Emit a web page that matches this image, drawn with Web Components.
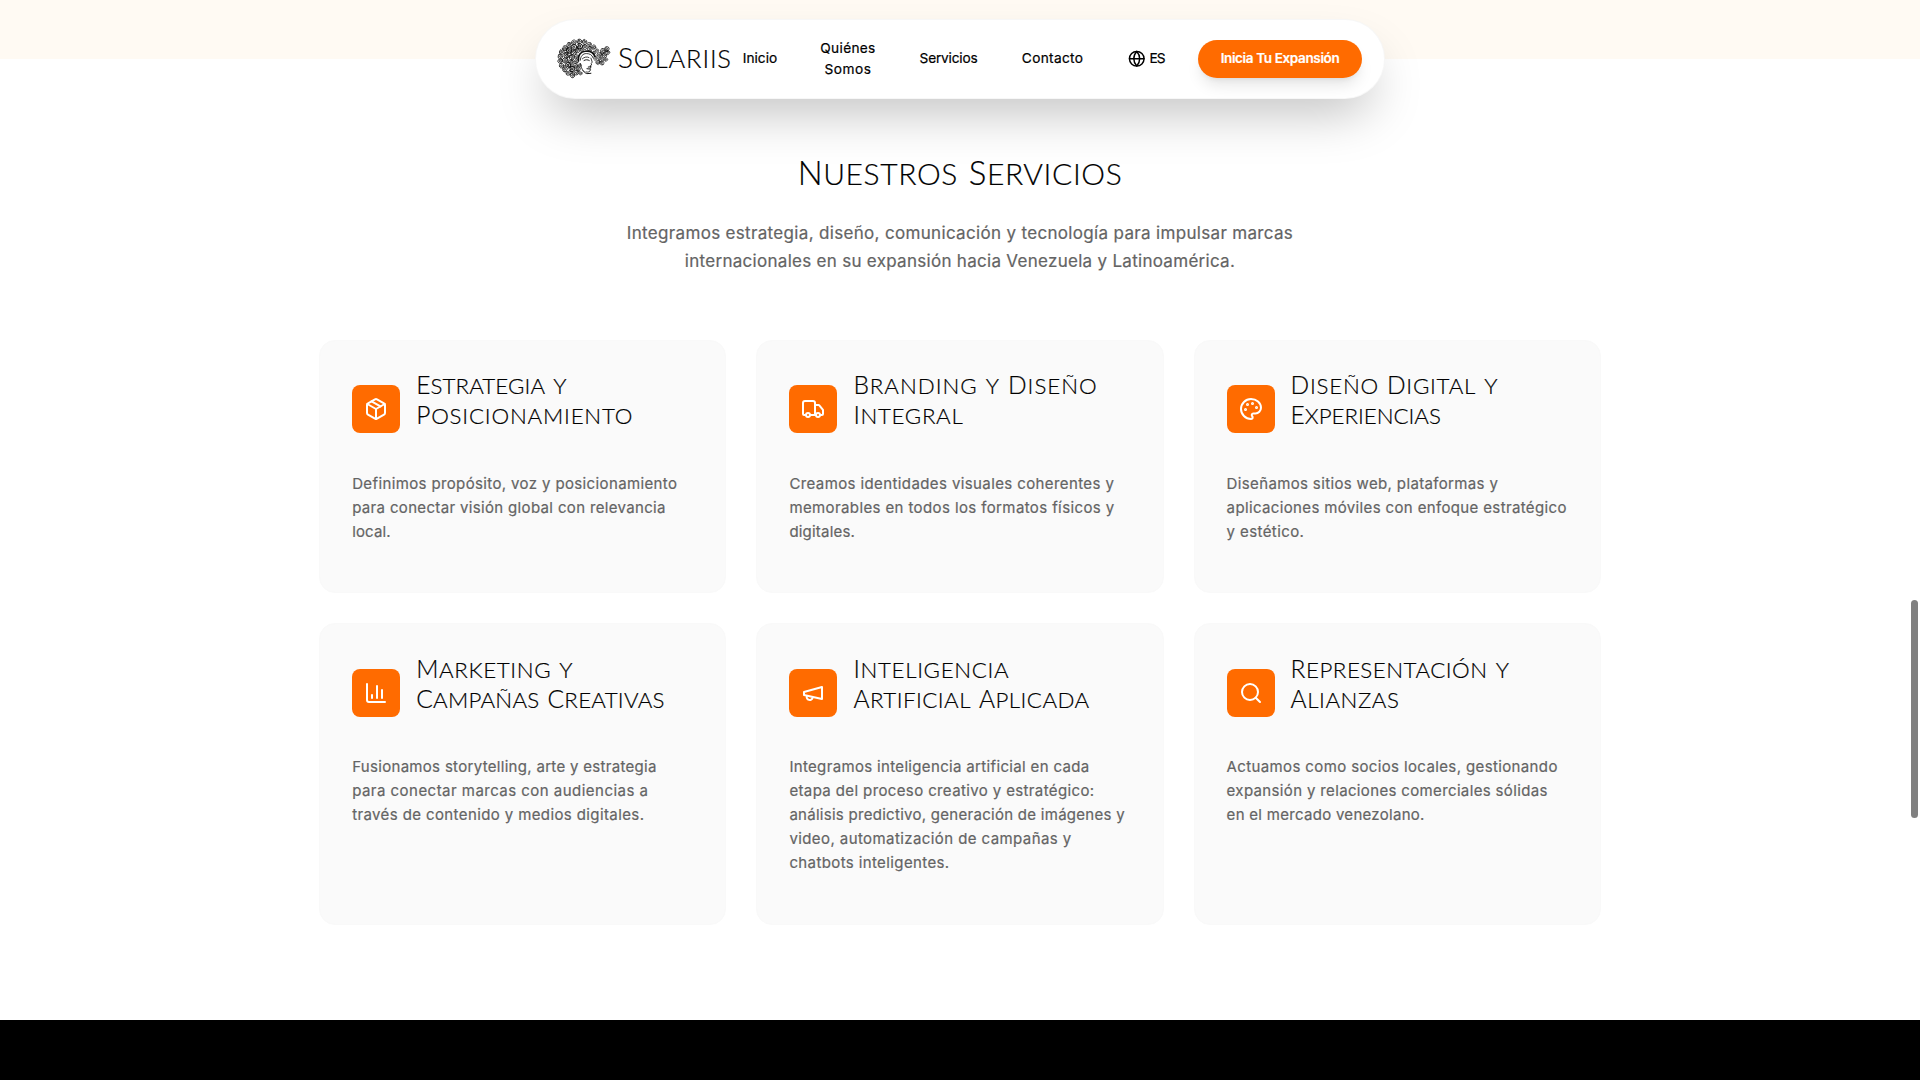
<!DOCTYPE html>
<html lang="es">
<head>
<meta charset="utf-8">
<title>Solariis</title>
<style>
html,body{margin:0;height:1080px;overflow:hidden;background:#fff}
body{font-family:Inter,"Liberation Sans",sans-serif;color:#000}
</style>
</head>
<body>
<solariis-page></solariis-page>
<script>
const define=(name,html,setup)=>{
  const t=document.createElement('template');t.innerHTML=html;
  customElements.define(name,class extends HTMLElement{
    connectedCallback(){
      if(this.shadowRoot)return;
      this.attachShadow({mode:'open'}).append(t.content.cloneNode(true));
      if(setup)setup(this,this.shadowRoot);
    }
  });
};

/* Letter-spacing that makes a line exactly w pixels wide. */
const fit=(host,span,n)=>{
  const w=parseFloat(host.getAttribute('w'));
  if(!w)return;
  const a=span.getBoundingClientRect().width;
  host.style.letterSpacing=((w-a)/(n-1)).toFixed(4)+'px';
};

/* One line of body text. */
define('text-line',`<style>:host{display:block;white-space:nowrap;-webkit-text-stroke:.2px currentColor}span{display:inline-block}</style><span></span>`,(h,r)=>{
  const s=r.querySelector('span');s.textContent=h.getAttribute('text');fit(h,s,s.textContent.length);
});

/* One line of display text: thin capitals with slightly taller initials. */
define('caps-line',`<style>
:host{display:block;white-space:nowrap;font-family:Lato,"Liberation Sans",sans-serif;font-weight:300;text-transform:uppercase;font-size:var(--s);-webkit-text-stroke:.2px currentColor}
span{display:inline-block}
.row{white-space:nowrap}
.sp{width:calc(var(--s)*.36)}
.cap::first-letter{font-size:calc(var(--s)*1.1);line-height:0}
</style><span class="row"></span>`,(h,r)=>{
  const row=r.querySelector('.row');const text=h.getAttribute('text');
  text.split(' ').forEach((w,i)=>{
    if(i){const g=document.createElement('span');g.className='sp';row.append(g)}
    const s=document.createElement('span');s.textContent=w;
    if(w[0]!==w[0].toLowerCase())s.className='cap';
    row.append(s);
  });
  fit(h,row,text.replace(/ /g,'').length);
});

const ICONS={
 box:'<path d="M11 21.73a2 2 0 0 0 2 0l7-4A2 2 0 0 0 21 16V8a2 2 0 0 0-1-1.73l-7-4a2 2 0 0 0-2 0l-7 4A2 2 0 0 0 3 8v8a2 2 0 0 0 1 1.73z"/><path d="M12 22V12"/><path d="M3.3 7 12 12l8.700-5"/><path d="m7.500 4.270 9 5.150"/>',
 truck:'<path d="M14 18V6a2 2 0 0 0-2-2H4a2 2 0 0 0-2 2v11a1 1 0 0 0 1 1h2"/><path d="M15 18H9"/><path d="M19 18h2a1 1 0 0 0 1-1v-3.650a1 1 0 0 0-.22-.624l-3.480-4.350A1 1 0 0 0 17.520 8H14"/><circle cx="17" cy="18" r="2"/><circle cx="7" cy="18" r="2"/>',
 palette:'<circle cx="13.500" cy="6.500" r=".5" fill="#fff"/><circle cx="17.500" cy="10.500" r=".5" fill="#fff"/><circle cx="8.500" cy="7.500" r=".5" fill="#fff"/><circle cx="6.500" cy="12.500" r=".5" fill="#fff"/><path d="M12 2C6.500 2 2 6.500 2 12s4.500 10 10 10c.926 0 1.648-.746 1.648-1.688 0-.437-.18-.835-.437-1.125-.29-.289-.438-.652-.438-1.125a1.640 1.640 0 0 1 1.668-1.668h1.996c3.051 0 5.555-2.503 5.555-5.554C21.965 6.012 17.461 2 12 2z"/>',
 chart:'<path d="M3 3v16a2 2 0 0 0 2 2h16"/><path d="M18 17V9"/><path d="M13 17V5"/><path d="M8 17v-3"/>',
 megaphone:'<path d="m3 11 18-5v12L3 14v-3z"/><path d="M11.600 16.800a3 3 0 1 1-5.800-1.600"/>',
 search:'<circle cx="11" cy="11" r="8"/><path d="m21 21-4.300-4.300"/>',
 globe:'<circle cx="12" cy="12" r="10"/><path d="M12 2a14.500 14.500 0 0 0 0 20 14.500 14.500 0 0 0 0-20"/><path d="M2 12h20"/>'
};
define('ui-icon',`<style>:host{display:block;flex:none}svg{display:block;width:100%;height:100%;fill:none;stroke:currentColor;stroke-width:2;stroke-linecap:round;stroke-linejoin:round}</style><svg viewBox="0 0 24 24"></svg>`,(h,r)=>{
  r.querySelector('svg').innerHTML=ICONS[h.getAttribute('name')];
});

/* Engraved head with curled hair and a small wing. */
define('brand-mark',`<style>:host{display:block;flex:none}svg{display:block;width:100%;height:100%;overflow:visible}</style>
<svg viewBox="24 24 158 122" fill="none" stroke="#111" stroke-linecap="round" stroke-linejoin="round">
<g class="curls" stroke-width="2.800"></g>
<path stroke-width="5" d="M86 92c-2-16 6-28 20-29 14-2 26 4 30 16"/>
<path stroke-width="2.500" d="M92 90c0-12 8-20 18-20s18 4 20 12M98 86c6-6 14-7 20-4M124 84l4 12-3 4 1 5-4 2 2 5-3 2 2 5c-1 6-8 9-14 7"/>
<path stroke-width="3" d="M103 91c5-3 11-3 16 0M116 111l8-1M100 122c5 6 10 9 12 9l12-1M112 116l8 1"/>
<path stroke-width="2.500" d="M92 100c2 10 4 18 10 24"/>
</svg>`,(h,r)=>{
  const pts=[[72,36,7],[89,33,7],[105,35,7],[58,44,7],[119,42,6],[133,50,6],[45,53,7],[36,65,7],[31,79,7],[31,93,7],[35,107,7],[45,118,7],[55,130,6],[68,136,7],[80,128,7],[92,130,5],[73,51,8],[90,48,8],[58,60,8],[50,75,8],[46,91,8],[55,105,8],[67,117,8],[71,67,8],[66,82,8],[64,96,7],[76,107,7],[86,117,6],[83,62,6],[106,50,7],[121,56,7],[80,79,6],[80,93,6],[90,106,5],[97,60,5],[138,84,6],[150,74,7],[160,62,7],[172,56,7],[155,88,7],[165,76,7],[175,67,6],[145,97,6],[158,98,6],[170,88,5],[143,61,5],[134,68,5]];
  r.querySelector('.curls').innerHTML=pts.map(([x,y,q],i)=>`<path transform="translate(${x} ${y}) rotate(${i*67}) scale(${q/8})" d="M-8 2C-9-5-3-9 3-8 9-6 9 3 4 6-1 8-5 4-4 0-3-4 2-4 3-1 3 1 1 3-1 2M-6 7C-2 10 4 9 7 6"/>`).join('');
});

define('nav-link',`<style>:host{display:flex;flex-direction:column;align-items:center;font-size:13.700px;line-height:21px;font-weight:400;text-align:center}</style><slot></slot>`);

define('site-header',`<style>
:host{position:absolute;left:535px;top:18.500px;z-index:5;width:850px;height:80.500px;box-sizing:border-box;border:1px solid rgba(0,0,0,.03);border-radius:40px;background:#fff;box-shadow:0 25px 50px -12px rgba(0,0,0,.25);display:flex;align-items:center;padding:0 22px}
brand-mark{width:52px;height:41px;margin-top:-1px}
caps-line{--s:25.500px;line-height:36px;margin-left:8px;width:125px;margin-top:-2px}
nav{display:flex;align-items:center;flex:1;justify-content:flex-start;margin-top:-1px}
.i{width:34px}.q{width:54px;margin-left:44px;padding-top:1px}.s{width:57px;margin-left:45px}.c{width:60px;margin-left:45.500px}
.lang{display:flex;align-items:center;gap:4px;margin-left:45.500px}
.lang ui-icon{width:17.500px;height:17.500px}
button{margin:0 0 0 auto;border:0;width:164px;height:38.500px;border-radius:20px;background:#ff6b00;color:#fff;font:600 13.500px/21px Inter,"Liberation Sans",sans-serif;padding:0 0 1px;display:flex;align-items:center;justify-content:center;box-shadow:0 10px 15px -3px rgba(0,0,0,.1),0 4px 6px -4px rgba(0,0,0,.1)}
</style>
<brand-mark></brand-mark><caps-line text="Solariis" w="113"></caps-line>
<nav>
<nav-link class="i"><text-line text="Inicio" w="34.500"></text-line></nav-link>
<nav-link class="q"><text-line text="Quiénes" w="55"></text-line><text-line text="Somos" w="46.500"></text-line></nav-link>
<nav-link class="s"><text-line text="Servicios" w="58"></text-line></nav-link>
<nav-link class="c"><text-line text="Contacto" w="61"></text-line></nav-link>
<div class="lang"><ui-icon name="globe"></ui-icon><nav-link><text-line text="ES" w="16"></text-line></nav-link></div>
</nav>
<button><text-line text="Inicia Tu Expansión" w="119"></text-line></button>`);

define('service-card',`<style>
:host{display:block;box-sizing:border-box;border:1px solid #f9f9f9;border-radius:16px;background:#fafafa;padding:26.500px 32px 0}
header{display:flex;gap:16px;height:60px}
.tile{flex:none;width:48px;height:48px;margin-top:18.300px;border-radius:8px;background:#ff6b00;color:#fff;display:flex;align-items:center;justify-content:center}
.tile ui-icon{width:24px;height:24px}
h3{margin:4px 0 0;--s:22.300px;line-height:30px}
p{margin:44.800px 0 0;font-size:15px;line-height:24px;color:#646464;font-weight:400}
</style><header><div class="tile"></div><h3></h3></header><p></p>`,(h,r)=>{
  const [icon,title,body]=JSON.parse(h.getAttribute('data'));
  const add=(p,tag,attrs)=>{const e=document.createElement(tag);for(const k in attrs)e.setAttribute(k,attrs[k]);p.append(e)};
  add(r.querySelector('.tile'),'ui-icon',{name:icon});
  title.forEach(([text,w])=>add(r.querySelector('h3'),'caps-line',{text,w:w+2.3}));
  body.forEach(([text,w])=>add(r.querySelector('p'),'text-line',{text,w:w+.8}));
});

const SERVICES=[
['box',[['Estrategia y',148],['Posicionamiento',214]],[['Definimos propósito, voz y posicionamiento',324],['para conectar visión global con relevancia',312.5],['local.',37.7]]],
['truck',[['Branding y Diseño',241],['Integral',107]],[['Creamos identidades visuales coherentes y',323.7],['memorables en todos los formatos físicos y',324],['digitales.',64.7]]],
['palette',[['Diseño Digital y',204.5],['Experiencias',148]],[['Diseñamos sitios web, plataformas y',270.5],['aplicaciones móviles con enfoque estratégico',339],['y estético.',76.5]]],
['chart',[['Marketing y',154],['Campañas Creativas',246]],[['Fusionamos storytelling, arte y estrategia',303.5],['para conectar marcas con audiencias a',295],['través de contenido y medios digitales.',291]]],
['megaphone',[['Inteligencia',153],['Artificial Aplicada',233.5]],[['Integramos inteligencia artificial en cada',299],['etapa del proceso creativo y estratégico:',304],['análisis predictivo, generación de imágenes y',334.5],['video, automatización de campañas y',281],['chatbots inteligentes.',159]]],
['search',[['Representación y',216],['Alianzas',106]],[['Actuamos como socios locales, gestionando',330],['expansión y relaciones comerciales sólidas',320],['en el mercado venezolano.',197]]]
];

define('services-section',`<style>
:host{display:flex;flex-direction:column;align-items:center;box-sizing:border-box;height:961px;padding-top:94px;background:#fff}
h2{margin:0;--s:30px;line-height:40px;height:40px}
.lead{margin:25.500px 0 0;font-size:17px;line-height:28px;color:#646464;font-weight:400;display:flex;flex-direction:column;align-items:center}
.grid{margin-top:65px;width:1281.700px;display:grid;grid-template-columns:repeat(3,1fr);grid-template-rows:253.500px 301.500px;gap:30.200px 30px}
</style>
<h2><caps-line text="Nuestros Servicios" w="324"></caps-line></h2>
<div class="lead"><text-line text="Integramos estrategia, diseño, comunicación y tecnología para impulsar marcas" w="666"></text-line><text-line text="internacionales en su expansión hacia Venezuela y Latinoamérica." w="550"></text-line></div>
<div class="grid"></div>`,(h,r)=>{
  const g=r.querySelector('.grid');
  SERVICES.forEach(s=>{const c=document.createElement('service-card');c.setAttribute('data',JSON.stringify(s));g.append(c)});
});

define('scroll-thumb',`<style>:host{position:absolute;right:2px;top:600px;width:7px;height:217.500px;border-radius:4px;background:#808080;z-index:9}</style>`);

define('solariis-page',`<style>
:host{display:block;position:relative;width:1920px;height:1080px;overflow:hidden}
.hero{height:59px;background:#fffaf3}
footer{height:60px;background:#000}
</style>
<site-header></site-header>
<div class="hero"></div>
<services-section></services-section>
<footer></footer>
<scroll-thumb></scroll-thumb>`);
</script>
</body>
</html>
